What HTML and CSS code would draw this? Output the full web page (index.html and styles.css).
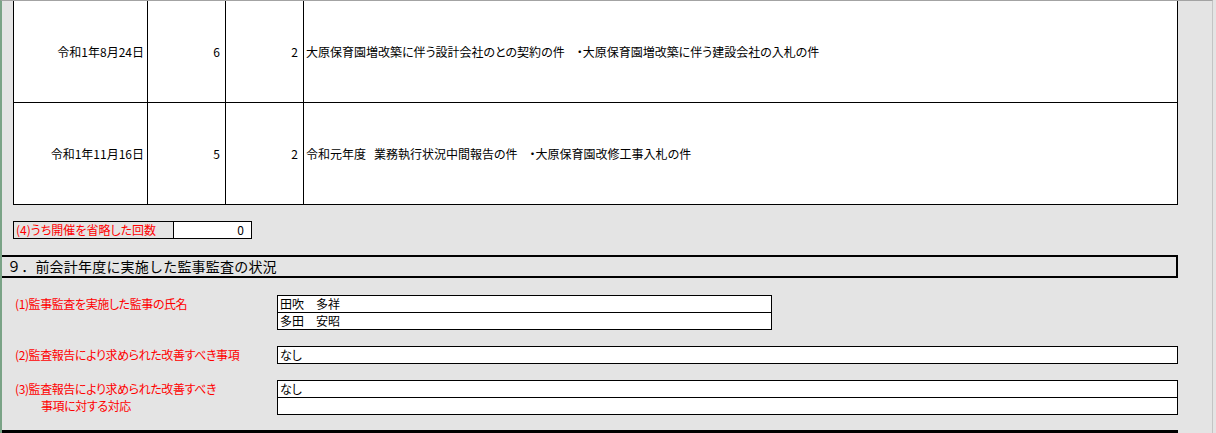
FILE: index.html
```html
<!DOCTYPE html>
<html lang="ja">
<head>
    <meta charset="UTF-8">
    <title>事業報告 - 監事監査の状況</title>
    <link rel="stylesheet" href="styles.css">
</head>
<body>
    <div class="sheet">
        <!-- 理事会の開催状況 -->
        <div class="minutes">
            <div class="minutes-row">
                <div class="cell date">令和1年8月24日</div>
                <div class="cell num">6</div>
                <div class="cell num">2</div>
                <div class="cell topic">大原保育園増改築に伴う設計会社のとの契約の件<span class="sep">・</span>大原保育園増改築に伴う建設会社の入札の件</div>
            </div>
            <div class="minutes-row">
                <div class="cell date">令和1年11月16日</div>
                <div class="cell num">5</div>
                <div class="cell num">2</div>
                <div class="cell topic">令和元年度<span class="gap"></span>業務執行状況中間報告の件<span class="sep">・</span>大原保育園改修工事入札の件</div>
            </div>
        </div>

        <div class="skipped">
            <div class="skipped-label">(4)うち開催を省略した回数</div>
            <div class="skipped-value">0</div>
        </div>

        <!-- 監事監査 -->
        <h2 class="section-title">９．前会計年度に実施した監事監査の状況</h2>

        <div class="audit">
            <div class="audit-item">
                <div class="audit-label">(1)監事監査を実施した監事の氏名</div>
                <div class="audit-box names">
                    <div class="line">田吹　多祥</div>
                    <div class="line">多田　安昭</div>
                </div>
            </div>
            <div class="audit-item">
                <div class="audit-label">(2)監査報告により求められた改善すべき事項</div>
                <div class="audit-box">
                    <div class="line">なし</div>
                </div>
            </div>
            <div class="audit-item">
                <div class="audit-label">(3)監査報告により求められた改善すべき<span class="indent">事項に対する対応</span></div>
                <div class="audit-box">
                    <div class="line">なし</div>
                    <div class="line"></div>
                </div>
            </div>
        </div>

        <div class="rule"></div>
    </div>
</body>
</html>
```

FILE: styles.css
```css
:root {
    --sheet-bg: #e4e4e4;
    --ink: #000;
    --label-red: #ff0000;
}

* {
    margin: 0;
    padding: 0;
    box-sizing: border-box;
}

body {
    background: var(--sheet-bg);
    color: var(--ink);
    font-family: "Noto Sans CJK JP", "Noto Sans", sans-serif;
    font-size: 12px;
    font-feature-settings: "palt";
    height: 433px;
    overflow: hidden;
}

.sheet {
    width: 1213px;
    height: 433px;
    border-top: 1px solid #a3a3a3;
    border-left: 2px solid #7aa386;
    border-right: 1px solid #c4c4c4;
}

/* Minutes table */
.minutes {
    margin-left: 11px;
    width: 1165px;
    border-left: 1px solid var(--ink);
    background: #fff;
}

.minutes-row {
    display: grid;
    grid-template-columns: 134px 78px 78px 874px;
    height: 102px;
    border-bottom: 1px solid var(--ink);
}

.cell {
    border-right: 1px solid var(--ink);
    display: flex;
    align-items: center;
    white-space: nowrap;
}

.cell.date {
    justify-content: flex-end;
    padding-right: 3px;
}

.cell.num {
    justify-content: flex-end;
    padding-right: 5px;
}

.cell.topic {
    padding-left: 2px;
}

.sep {
    margin-left: 12px;
}

.gap {
    display: inline-block;
    width: 8px;
}

/* Skipped meetings */
.skipped {
    display: flex;
    margin: 16px 0 0 11px;
    width: 239px;
    height: 18px;
    border: 1px solid var(--ink);
    line-height: 16px;
}

.skipped-label {
    width: 160px;
    padding-left: 2px;
    color: var(--label-red);
    border-right: 1px solid var(--ink);
}

.skipped-value {
    flex: 1;
    background: #fff;
    text-align: right;
    padding-right: 7px;
}

/* Section heading */
.section-title {
    margin-top: 16px;
    width: 1176px;
    height: 23px;
    border-top: 2px solid var(--ink);
    border-bottom: 2px solid var(--ink);
    border-right: 2px solid var(--ink);
    font-size: 14px;
    font-weight: normal;
    line-height: 19px;
    padding-left: 5px;
    letter-spacing: 0.2px;
    font-feature-settings: normal;
}

/* Audit items */
.audit {
    margin-left: 11px;
}

.audit-item {
    display: flex;
    margin-top: 16px;
}

.audit-item:first-child {
    margin-top: 17px;
}

.audit-label {
    width: 264px;
    padding-left: 2px;
    color: var(--label-red);
    line-height: 17px;
    letter-spacing: -0.4px;
}

.indent {
    display: block;
    padding-left: 26px;
}

.audit-box {
    width: 901px;
    border: 1px solid var(--ink);
    background: #fff;
}

.audit-box.names {
    width: 495px;
}

.line {
    height: 16px;
    line-height: 16px;
    padding-left: 2px;
}

.line + .line {
    height: 17px;
    border-top: 1px solid var(--ink);
}

.rule {
    margin-top: 15px;
    width: 1176px;
    height: 3px;
    background: var(--ink);
}
```
